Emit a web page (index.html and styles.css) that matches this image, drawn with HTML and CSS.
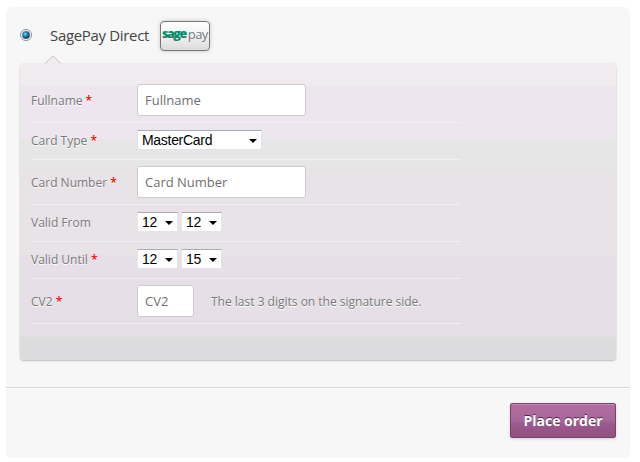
FILE: index.html
```html
<!DOCTYPE html>
<html lang="en">
<head>
<meta charset="utf-8">
<title>Payment</title>
<link rel="stylesheet" href="styles.css">
</head>
<body>
<form class="card">
  <div class="method">
    <svg class="radio" width="14" height="14" viewBox="0 0 14 14">
      <defs><radialGradient id="dot" cx=".4" cy=".38" r=".7"><stop offset="0" stop-color="#8fdcf5"/><stop offset=".4" stop-color="#2683b8"/><stop offset="1" stop-color="#06203f"/></radialGradient></defs>
      <circle cx="7" cy="7" r="5.6" fill="#fafafa" stroke="#94999e"/>
      <circle cx="7" cy="7" r="4.5" fill="#c3cbd3"/>
      <circle cx="7" cy="7" r="3.7" fill="url(#dot)"/>
    </svg>
    <span class="method-name">SagePay Direct</span>
    <span class="logo"><b>sage</b><i>pay</i></span>
  </div>
  <div class="panel">
    <svg class="arrow" width="18" height="9" viewBox="0 0 18 9"><path d="M1 8.5 9 .8l8 7.7z" fill="#f0ecef"/><path d="M1 8.5 9 .8l8 7.7" fill="none" stroke="#c4c2c4"/></svg>
    <div class="rows">
      <div class="row tall"><span class="label">Fullname <em>*</em></span><span class="input">Fullname</span></div>
      <div class="row"><span class="label">Card Type <em>*</em></span><span class="select wide">MasterCard</span></div>
      <div class="row tall"><span class="label">Card Number <em>*</em></span><span class="input">Card Number</span></div>
      <div class="row"><span class="label">Valid From</span><span class="select num">12</span><span class="select num">12</span></div>
      <div class="row"><span class="label">Valid Until <em>*</em></span><span class="select num">12</span><span class="select num">15</span></div>
      <div class="row tall"><span class="label">CV2 <em>*</em></span><span class="input short">CV2</span><span class="hint">The last 3 digits on the signature side.</span></div>
    </div>
  </div>
  <div class="footer"><button type="button" class="order">Place order</button></div>
</form>
</body>
</html>
```

FILE: styles.css
```css
* { box-sizing: border-box; }
body { margin: 0; padding: 7px 10px 0 6px; background: #fff; font-family: "Open Sans", sans-serif; }
.card { width: 624px; height: 451px; margin: 0; background: #f7f7f7; border-radius: 6px; }
.method { height: 56px; padding-left: 13px; display: flex; align-items: center; }
.radio { flex: none; }
.method-name { margin-left: 17px; width: 110px; font-size: 15px; color: #444; white-space: nowrap; letter-spacing: -.33px; }
.logo { width: 50px; height: 30px; margin-top: 1px; padding-bottom: 3px; display: flex; align-items: center; justify-content: center; border: 1px solid #777; border-radius: 4px; background: linear-gradient(#fff, #f1f1f2 50%, #dcdcde); box-shadow: 0 0 4px rgba(0,0,0,.2); font-size: 13px; line-height: 14px; white-space: nowrap; }
.logo b { color: #0a8a6c; font-size: 12.5px; font-weight: 800; letter-spacing: -1.5px; }
.logo i { margin-left: 2px; color: #777b84; font-size: 13px; font-style: normal; letter-spacing: -.5px; }
.panel { position: relative; width: 596px; height: 297px; margin-left: 14px; padding: 14px 11px 0; border-radius: 4px; box-shadow: 0 1px 2px rgba(0,0,0,.24);
  background: linear-gradient(#f0ebee 0 23px, #eee6ef 23px 76px, #e6e6e6 76px 107px, #e8e3e7 107px 192px, #e6dfe7 192px 273px, #dedede 273px 276px, #dcdbdd 276px); }
.arrow { position: absolute; left: 24px; top: -8px; }
.rows { width: 430px; border-top: 1px solid #f2eef1; }
.row { height: 37px; padding-bottom: 1px; display: flex; align-items: center; border-bottom: 1px solid #f2eff2; }
.row.tall { height: 45px; padding-bottom: 0; }
.label { width: 106px; flex: none; font-size: 12px; color: #777; text-shadow: 0 1px 0 #fff; white-space: nowrap; }
.label em { color: #f00; font-style: normal; font-weight: 600; }
.input { width: 169px; height: 32px; padding-left: 7px; border: 1px solid #ccc; border-radius: 3px; background: #fff; color: #707070; font-size: 13px; line-height: 31px; white-space: nowrap; }
.short { width: 57px; }
.hint { margin-left: 17px; font-size: 12px; color: #777; text-shadow: 0 1px 0 #fff; white-space: nowrap; }
.select { position: relative; height: 20px; margin-top: -1px; padding-left: 4px; border: 1px solid #e3e3ea; border-top-color: #abadb3; background: #fff; color: #000; font: 14px/18px "Liberation Sans", sans-serif; letter-spacing: -.3px; }
.select::after { content: ""; position: absolute; right: 4px; top: 8px; border: 4px solid transparent; border-top-color: #000; border-bottom: 0; }
.wide { width: 125px; }
.num { width: 41px; margin-right: 3px; }
.footer { height: 71px; margin-top: 27px; padding: 15px 14px 0 0; border-top: 1px solid #d8d8d8; box-shadow: inset 0 1px #fff; display: flex; justify-content: flex-end; align-items: flex-start; }
.order { width: 106px; height: 35px; padding: 0 0 1px; border: 1px solid #764269; border-radius: 2px; background: linear-gradient(#b46f9f, #a5669a 50%, #9b5a8d 60%, #935080); box-shadow: inset 0 1px #c08ab2, 0 1px 3px rgba(0,0,0,.15); color: #fff; font: 700 14px "Open Sans", sans-serif; text-shadow: 0 -1px 0 #502545; white-space: nowrap; }
```
